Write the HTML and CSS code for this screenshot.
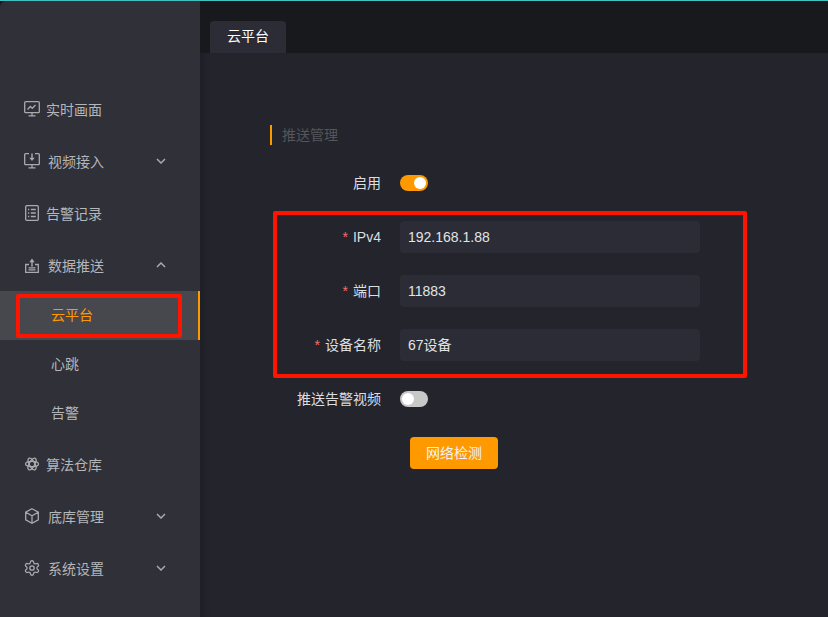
FILE: index.html
```html
<!DOCTYPE html>
<html lang="zh-CN">
<head>
<meta charset="utf-8">
<title>云平台</title>
<link rel="stylesheet" href="styles.css">
</head>
<body>
<div class="app">
  <aside class="sidebar">
    <nav class="menu">
      <div class="item">
        <svg class="ico" viewBox="0 0 16 16"><rect x="0.700" y="0.700" width="14.600" height="11" rx="1"/><path d="M3.500 8.500l2.800-3 2 1.800 3.200-3.300M4.500 14.800h7M8 11.700v3"/></svg>
        <span class="label">实时画面</span>
      </div>
      <div class="item">
        <svg class="ico" viewBox="0 0 16 16"><path d="M5 .7H1.500a.8.8 0 0 0-.8.8v9.400a.8.8 0 0 0 .8.800h13a.8.8 0 0 0 .8-.8V1.500a.8.8 0 0 0-.8-.8H11M4.500 14.800h7M8 11.700v3"/><path class="solid" d="M7.300.5h1.400v4.200h2L8 8 5.300 4.700h2z"/></svg>
        <span class="label shift">视频接入</span>
        <svg class="chev" viewBox="0 0 10 6"><path d="M1 1l4 4 4-4"/></svg>
      </div>
      <div class="item">
        <svg class="ico" viewBox="0 0 16 16"><rect x="1.700" y="0.700" width="12.600" height="14.600" rx="1"/><path d="M4 4.500h1.200M4 8h1.200M4 11.500h1.200M6.800 4.500h5M6.800 8h5M6.800 11.500h5"/></svg>
        <span class="label">告警记录</span>
      </div>
      <div class="item">
        <svg class="ico" viewBox="0 0 16 16"><path d="M5 7.500H1.700v7.800h12.600V7.500H11M4.500 12.900h7"/><path class="solid" d="M7.300 9.800h1.400V5.200h2L8 1.500 5.300 5.200h2zM4.500 10.300h7v1.200h-7z"/></svg>
        <span class="label shift">数据推送</span>
        <svg class="chev" viewBox="0 0 10 6"><path d="M1 5l4-4 4 4"/></svg>
      </div>
      <div class="sub active">云平台</div>
      <div class="sub">心跳</div>
      <div class="sub">告警</div>
      <div class="item">
        <svg class="ico" viewBox="0 0 16 16"><ellipse cx="8" cy="8" rx="6.500" ry="2.700"/><ellipse cx="8" cy="8" rx="6.500" ry="2.700" transform="rotate(60 8 8)"/><ellipse cx="8" cy="8" rx="6.500" ry="2.700" transform="rotate(120 8 8)"/></svg>
        <span class="label">算法仓库</span>
      </div>
      <div class="item">
        <svg class="ico" viewBox="0 0 16 16"><path d="M8 .8l6.300 3.400v7.600L8 15.200l-6.300-3.400V4.200zM1.700 4.200L8 7.800l6.300-3.600M8 7.800v7.400"/></svg>
        <span class="label shift">底库管理</span>
        <svg class="chev" viewBox="0 0 10 6"><path d="M1 1l4 4 4-4"/></svg>
      </div>
      <div class="item">
        <svg class="ico gear" viewBox="1 1 22 22"><circle cx="12" cy="12" r="3"/><path d="M12.220 2h-.44a2 2 0 0 0-2 2v.18a2 2 0 0 1-1 1.730l-.43.25a2 2 0 0 1-2 0l-.15-.08a2 2 0 0 0-2.730.73l-.22.38a2 2 0 0 0 .73 2.730l.15.1a2 2 0 0 1 1 1.720v.51a2 2 0 0 1-1 1.740l-.15.09a2 2 0 0 0-.73 2.730l.22.38a2 2 0 0 0 2.730.73l.15-.08a2 2 0 0 1 2 0l.43.25a2 2 0 0 1 1 1.730V20a2 2 0 0 0 2 2h.44a2 2 0 0 0 2-2v-.18a2 2 0 0 1 1-1.730l.43-.25a2 2 0 0 1 2 0l.15.08a2 2 0 0 0 2.730-.73l.22-.39a2 2 0 0 0-.73-2.730l-.15-.08a2 2 0 0 1-1-1.740v-.5a2 2 0 0 1 1-1.740l.15-.09a2 2 0 0 0 .73-2.730l-.22-.38a2 2 0 0 0-2.730-.73l-.15.08a2 2 0 0 1-2 0l-.43-.25a2 2 0 0 1-1-1.730V4a2 2 0 0 0-2-2z"/></svg>
        <span class="label shift">系统设置</span>
        <svg class="chev" viewBox="0 0 10 6"><path d="M1 1l4 4 4-4"/></svg>
      </div>
    </nav>
  </aside>
  <main class="main">
    <header class="tabs"><div class="tab">云平台</div></header>
    <section class="content">
      <h2 class="title">推送管理</h2>
      <form class="form">
        <div class="row">
          <span class="field-label">启用</span>
          <span class="switch on"></span>
        </div>
        <div class="row">
          <span class="field-label latin"><i>*</i>IPv4</span>
          <div class="input">192.168.1.88</div>
        </div>
        <div class="row">
          <span class="field-label"><i>*</i>端口</span>
          <div class="input">11883</div>
        </div>
        <div class="row">
          <span class="field-label"><i>*</i>设备名称</span>
          <div class="input">67设备</div>
        </div>
        <div class="row">
          <span class="field-label">推送告警视频</span>
          <span class="switch"></span>
        </div>
        <div class="row actions">
          <button class="btn" type="button">网络检测</button>
        </div>
      </form>
    </section>
  </main>
  <div class="mark mark-menu"></div>
  <div class="mark mark-form"></div>
</div>
</body>
</html>
```
FILE: styles.css
```css
* { box-sizing: border-box; }
html, body { margin: 0; height: 100%; background: #23242c; overflow: hidden; }
body { font: 14px "Liberation Sans", "Noto Sans CJK SC", sans-serif; }
.app { position: relative; display: flex; height: 617px; width: 828px; border-top: 1px solid #3fc1c0; background: #18191c; }
.sidebar { width: 200px; flex: none; padding-top: 82px; background: #2f3038; border-top-left-radius: 6px; }
.item { display: flex; align-items: center; height: 52px; padding-left: 24px; color: #b4b6ba; }
.ico { width: 16px; height: 16px; flex: none; fill: none; stroke: #a8aaae; stroke-width: 1.300; }
.ico.gear { stroke-width: 1.800; }
.ico .solid { fill: #a8aaae; stroke: none; }
.label { margin-left: 6px; }
.label.shift { margin-left: 8px; }
.chev { width: 10px; height: 6px; margin-left: auto; margin-right: 34px; fill: none; stroke: #a8aaae; stroke-width: 1.500; }
.sub { height: 49px; line-height: 49px; padding-left: 51px; color: #b4b6ba; }
.sub.active { color: #ff9900; background: #47484e; border-right: 2px solid #ff9900; }
.main { flex: 1; display: flex; flex-direction: column; min-width: 0; }
.tabs { flex: none; height: 52px; padding: 20px 0 0 10px; background: #18191c; }
.tab { width: 76px; height: 32px; line-height: 31px; text-align: center; color: #fff; background: #2b2c35; border-radius: 4px 4px 0 0; }
.content { flex: 1; padding: 72px 0 0 70px; background: #23242c; box-shadow: inset 8px 0 8px -6px rgba(0,0,0,.2); }
.title { margin: 0; height: 20px; padding-left: 10px; font-size: 14px; font-weight: 400; line-height: 20px; color: #54565a; border-left: 2px solid #ff9900; }
.form { margin-top: 22px; }
.row { display: flex; align-items: center; height: 32px; margin-bottom: 22px; }
.field-label { width: 111px; margin-right: 19px; padding-bottom: 2px; text-align: right; color: #dcdee0; white-space: nowrap; }
.field-label.latin { padding-bottom: 0; }
.field-label i { margin-right: 5px; font-style: normal; color: #f56c6c; }
.input { width: 300px; height: 32px; padding-left: 8px; line-height: 32px; color: #e2e4e6; background: #2b2c35; border-radius: 4px; }
.switch { position: relative; width: 28px; height: 16px; background: #c8c8c8; border-radius: 8px; }
.switch::after { content: ""; position: absolute; top: 2px; left: 2px; width: 12px; height: 12px; background: #fff; border-radius: 50%; }
.switch.on { background: #ff9900; }
.switch.on::after { left: 14px; }
.actions { padding-left: 140px; }
.btn { width: 88px; height: 32px; padding: 0 0 2px; font: inherit; color: #f2f2f2; background: #ff9900; border: 0; border-radius: 4px; }
.mark { position: absolute; border: 4px solid #ff1400; border-radius: 2px; }
.mark-menu { left: 16px; top: 293px; width: 166px; height: 44px; }
.mark-form { left: 273px; top: 210px; width: 474px; height: 167px; }
```
